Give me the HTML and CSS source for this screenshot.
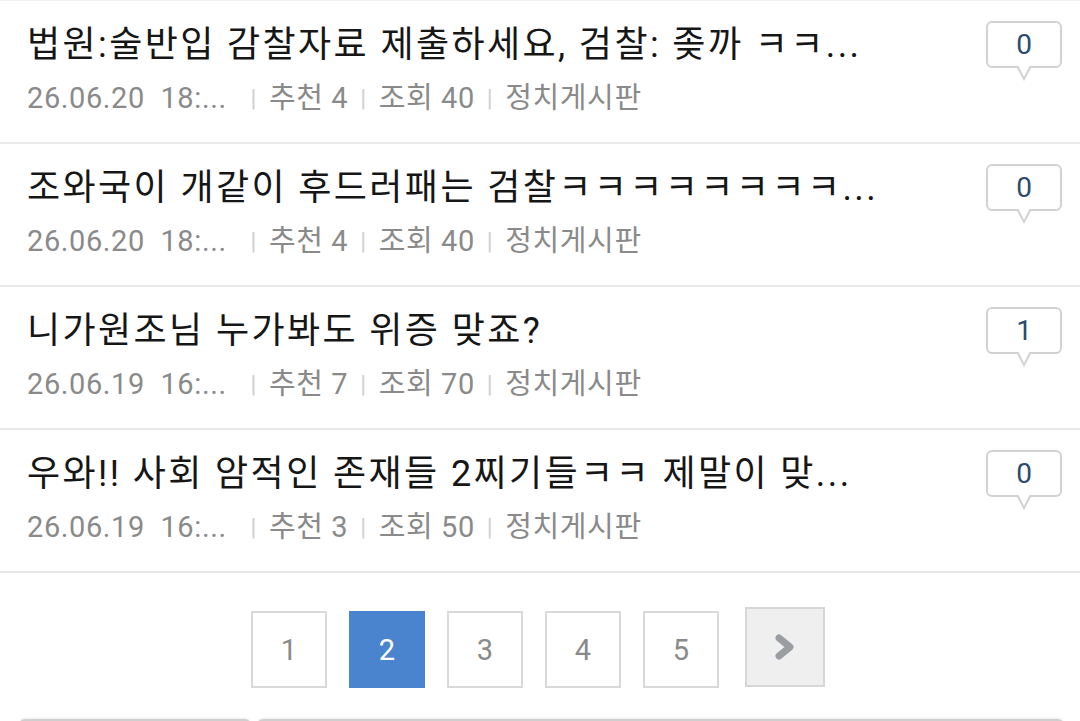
FILE: index.html
```html
<!DOCTYPE html>
<html lang="ko">
<head>
  <meta charset="UTF-8" />
  <title>정치게시판</title>
  <link rel="stylesheet" href="styles.css">
</head>
<body>

  <ul class="post-list">
    <li class="post">
      <div class="post-body">
        <a class="post-title" href="#">법원:술반입 감찰자료 제출하세요, 검찰: 좆까 ㅋㅋ...</a>
        <div class="post-meta">
          <span class="date">26.06.20&nbsp; 18:...</span>
          <span class="sep">|</span>추천 4<span class="sep">|</span>조회 40<span class="sep">|</span>정치게시판
        </div>
      </div>
      <span class="reply-count">0</span>
    </li>
    <li class="post">
      <div class="post-body">
        <a class="post-title" href="#">조와국이 개같이 후드러패는 검찰ㅋㅋㅋㅋㅋㅋㅋㅋ...</a>
        <div class="post-meta">
          <span class="date">26.06.20&nbsp; 18:...</span>
          <span class="sep">|</span>추천 4<span class="sep">|</span>조회 40<span class="sep">|</span>정치게시판
        </div>
      </div>
      <span class="reply-count">0</span>
    </li>
    <li class="post">
      <div class="post-body">
        <a class="post-title" href="#">니가원조님 누가봐도 위증 맞죠?</a>
        <div class="post-meta">
          <span class="date">26.06.19&nbsp; 16:...</span>
          <span class="sep">|</span>추천 7<span class="sep">|</span>조회 70<span class="sep">|</span>정치게시판
        </div>
      </div>
      <span class="reply-count">1</span>
    </li>
    <li class="post">
      <div class="post-body">
        <a class="post-title" href="#">우와!! 사회 암적인 존재들 2찌기들ㅋㅋ 제말이 맞...</a>
        <div class="post-meta">
          <span class="date">26.06.19&nbsp; 16:...</span>
          <span class="sep">|</span>추천 3<span class="sep">|</span>조회 50<span class="sep">|</span>정치게시판
        </div>
      </div>
      <span class="reply-count">0</span>
    </li>
  </ul>

  <!-- paging -->
  <nav class="paging">
    <a class="page" href="#">1</a>
    <a class="page current" href="#">2</a>
    <a class="page" href="#">3</a>
    <a class="page" href="#">4</a>
    <a class="page" href="#">5</a>
    <a class="page next" href="#">
      <svg width="24" height="30" viewBox="0 0 24 30">
        <path d="M6 6 L17 15 L6 24" fill="none" stroke="#9a9ea2" stroke-width="7" stroke-linejoin="round" stroke-linecap="round"/>
      </svg>
    </a>
  </nav>

  <div class="search-bar">
    <div class="search-select"></div>
    <div class="search-input"></div>
  </div>

</body>
</html>
```

FILE: styles.css
```css
body {
  margin: 0;
  font-family: Roboto, "Noto Sans CJK KR", sans-serif;
  background: #fff;
  color: #1a1a1a;
  overflow: hidden;
}
.post-list {
  list-style: none;
  margin: 0;
  padding: 0;
  border-top: 1px solid #f0f0f0;
}
.post {
  display: flex;
  align-items: flex-start;
  height: 141px;
  border-bottom: 2px solid #e9e9e9;
  padding: 0 18px 0 27px;
}
.post-body {
  flex: 1;
  min-width: 0;
}
.post-title {
  display: block;
  margin-top: 21px;
  font-size: 36px;
  line-height: 46px;
  letter-spacing: 2.4px;
  color: #161616;
  text-decoration: none;
  white-space: nowrap;
}
.post-meta {
  margin-top: 11px;
  font-size: 29px;
  line-height: 38px;
  letter-spacing: 0.6px;
  color: #8a8a8a;
  white-space: nowrap;
}
.post-meta .date {
  margin-right: 4px;
}
.post-meta .sep {
  color: #cfcfcf;
  font-size: 24px;
  margin: 0 12px;
  position: relative;
  top: -2px;
}
.reply-count {
  position: relative;
  flex: none;
  width: 72px;
  height: 43px;
  margin-top: 20px;
  border: 2px solid #d2d2d2;
  border-radius: 6px;
  text-align: center;
  font-size: 28px;
  line-height: 43px;
  color: #2b4c70;
  background: #fff;
}
.reply-count::before,
.reply-count::after {
  content: "";
  position: absolute;
  left: 50%;
  width: 0;
  height: 0;
  border-style: solid;
  border-color: transparent;
}
.reply-count::before {
  bottom: -15px;
  margin-left: -8px;
  border-width: 15px 8px 0 8px;
  border-top-color: #d2d2d2;
}
.reply-count::after {
  bottom: -11px;
  margin-left: -6px;
  border-width: 12px 6px 0 6px;
  border-top-color: #fff;
}

.paging {
  display: flex;
  justify-content: center;
  align-items: flex-end;
  gap: 22px;
  padding-top: 34px;
  padding-right: 4px;
}
.page {
  box-sizing: border-box;
  width: 76px;
  height: 77px;
  border: 2px solid #d9d9d9;
  display: flex;
  align-items: center;
  justify-content: center;
  font-size: 29px;
  color: #8a8a8a;
  text-decoration: none;
  background: #fff;
}
.page.current {
  background: #4a84cf;
  border-color: #4a84cf;
  color: #fff;
}
.page.next {
  width: 80px;
  height: 80px;
  margin-left: 4px;
  margin-bottom: 1px;
  background: #efefef;
  border-color: #d6d6d6;
}

.search-bar {
  display: flex;
  gap: 6px;
  padding: 31px 16px 0 19px;
}
.search-select,
.search-input {
  height: 60px;
  border: 2px solid #cfcfcf;
  border-radius: 6px;
  box-shadow: 0 -1px 2px rgba(0, 0, 0, 0.08);
}
.search-select {
  width: 228px;
}
.search-input {
  flex: 1;
}
```
